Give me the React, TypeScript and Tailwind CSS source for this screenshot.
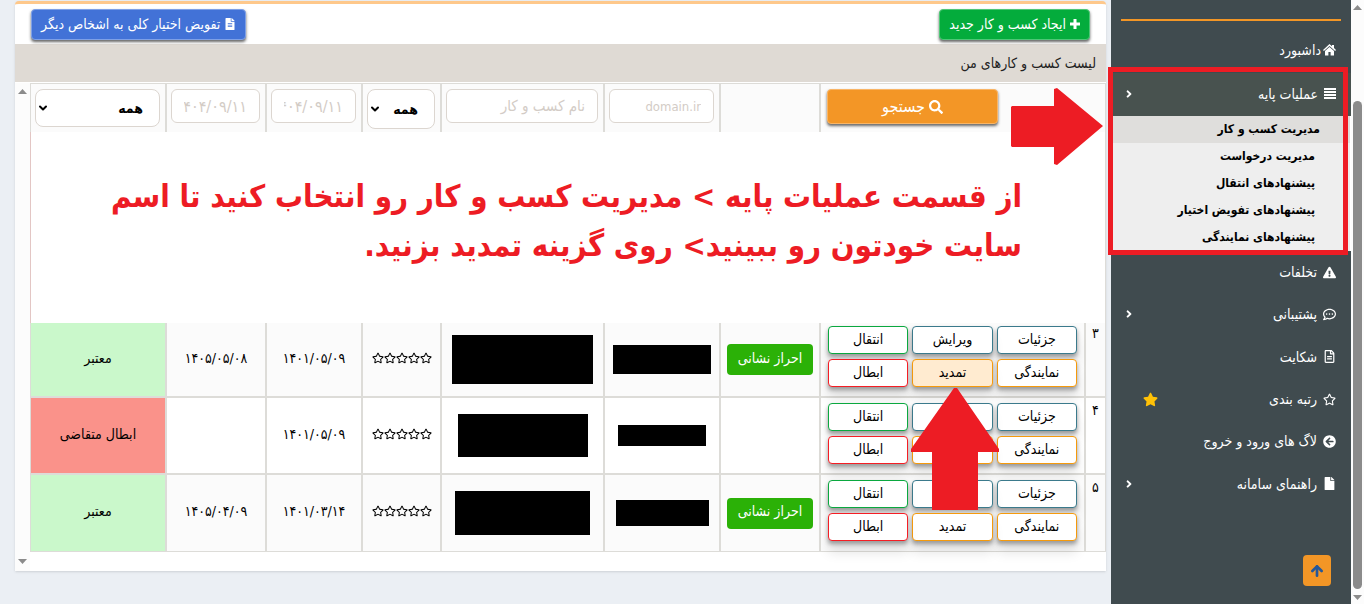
import type { ReactNode } from 'react';
import clsx from 'clsx';
import {
  FaAngleRight,
  FaArrowCircleLeft,
  FaExclamationTriangle,
  FaFile,
  FaFileAlt,
  FaRegCommentDots,
  FaRegFileAlt,
  FaRegStar,
  FaSearch,
  FaStar,
} from 'react-icons/fa';
import { ArrowUp, ChevronDown } from 'lucide-react';

const submenu = [
  'مدیریت کسب و کار',
  'مدیریت درخواست',
  'پیشنهادهای انتقال',
  'پیشنهادهای تفویض اختیار',
  'پیشنهادهای نمایندگی',
];

const menu = [
  { icon: FaExclamationTriangle, label: 'تخلفات' },
  { icon: FaRegCommentDots, label: 'پشتیبانی', expandable: true },
  { icon: FaRegFileAlt, label: 'شکایت' },
  { icon: FaRegStar, label: 'رتبه بندی', starred: true },
  { icon: FaArrowCircleLeft, label: 'لاگ های ورود و خروج' },
  { icon: FaFile, label: 'راهنمای سامانه', expandable: true },
];

const actions = [
  { label: 'جزئیات', border: 'border-[#3b7a8c]' },
  { label: 'ویرایش', border: 'border-[#3b7a8c]' },
  { label: 'انتقال', border: 'border-[#0aa83f]' },
  { label: 'نمایندگی', border: 'border-[#f59a0c]' },
  { label: 'تمدید', border: 'border-[#f59a0c]' },
  { label: 'ابطال', border: 'border-[#f51d24]' },
];

const rows = [
  {
    index: '۳',
    verify: true,
    domainMask: 'w-[98px] h-[29px]',
    nameMask: 'w-[141px] h-[49px]',
    start: '۱۴۰۱/۰۵/۰۹',
    end: '۱۴۰۵/۰۵/۰۸',
    status: 'معتبر',
    valid: true,
    highlight: true,
  },
  {
    index: '۴',
    verify: false,
    domainMask: 'w-[88px] h-[21px]',
    nameMask: 'w-[130px] h-[43px]',
    start: '۱۴۰۱/۰۵/۰۹',
    end: '',
    status: 'ابطال متقاضی',
    valid: false,
    highlight: false,
  },
  {
    index: '۵',
    verify: true,
    domainMask: 'w-[93px] h-[26px]',
    nameMask: 'w-[135px] h-[44px]',
    start: '۱۴۰۱/۰۳/۱۴',
    end: '۱۴۰۵/۰۴/۰۹',
    status: 'معتبر',
    valid: true,
    highlight: false,
  },
];

const inputClass =
  'block w-full h-[34px] rounded-md border border-[#dcd6d0] bg-white px-3 outline-none placeholder:text-[#d3ccc6]';

const raisedButton = 'flex items-center justify-center gap-1 rounded-sm border text-white shadow-[0_2px_3px_#666]';

function Cell({ className, edge = 'border-l-2', children }: { className?: string; edge?: string; children?: ReactNode }) {
  return (
    <td className={clsx('border-b-2 border-[#dddcd8] p-0 text-center group-last:border-b', edge, className)}>{children}</td>
  );
}

function FilterCell({ edge = 'border-l-2', children }: { edge?: string; children?: ReactNode }) {
  return (
    <th className={clsx('border-t border-[#dddcd8] bg-[#fbfbfb] pt-[5px] pr-[5px] pb-0 pl-1 align-top font-normal', edge)}>
      {children}
    </th>
  );
}

function FilterSelect({ label, className }: { label: string; className: string }) {
  return (
    <div className="relative">
      <select
        aria-label={label}
        className={clsx('block w-full appearance-none rounded-lg border border-[#dcd6d0] bg-white px-4 text-sm font-bold text-black', className)}
      >
        <option>همه</option>
      </select>
      <ChevronDown className="pointer-events-none absolute left-0.5 top-1/2 size-3 -translate-y-1/2 text-black" strokeWidth={4} />
    </div>
  );
}

function ScrollRail({ children, className }: { children?: ReactNode; className: string }) {
  return (
    <div className={clsx('flex shrink-0 flex-col items-center bg-[#fcfcfc]', className)} aria-hidden="true">
      <svg className="h-[5px] w-[9px] shrink-0 fill-[#8b8b8b]" viewBox="0 0 9 5">
        <path d="M4.5 0 9 5H0z" />
      </svg>
      {children}
      <svg className="h-[5px] w-[9px] shrink-0 fill-[#8b8b8b]" viewBox="0 0 9 5">
        <path d="M0 0h9L4.500 5z" />
      </svg>
    </div>
  );
}

function HomeIcon() {
  return (
    <svg className="h-3 w-[13px]" viewBox="0 0 13 12" fill="currentColor" aria-hidden="true">
      <path d="M6.500 0 9 2.300V1h2v3.100l2 1.900-.9 1L6.500 1.900.9 7 0 6z" />
      <path d="M6.500 3 11 7v4.500H7.600V8H5.400v3.500H2V7z" />
    </svg>
  );
}

function BarsIcon() {
  return (
    <svg className="h-[11px] w-3" viewBox="0 0 12 11" fill="currentColor" aria-hidden="true">
      <path d="M0 0h12v2H0zM0 3h12v2H0zM0 6h12v2H0zM0 9h12v2H0z" />
    </svg>
  );
}

function PlusIcon() {
  return (
    <svg className="size-2.5" viewBox="0 0 10 10" fill="currentColor" aria-hidden="true">
      <path d="M3.500 0h3v3.500H10v3H6.500V10h-3V6.500H0v-3h3.500z" />
    </svg>
  );
}

function Sidebar() {
  return (
    <aside className="flex w-60 shrink-0 flex-col bg-[#404b4f] text-sm text-white">
      <div className="mx-2.5 mt-[19px] h-0.5 bg-[#f39626]" />
      <nav>
        <a href="#dashboard" className="mt-2 flex h-11 items-center gap-0.5 pr-[15px] pb-0.5">
          <HomeIcon />
          داشبورد
        </a>
        <div className="relative">
          <a href="#base" className="flex h-[43px] items-center gap-1.5 border-l-2 border-[#f39626] bg-[#48524f] pr-[15px] pb-0.5 pl-2.5">
            <BarsIcon />
            <span className="flex-1">عملیات پایه</span>
            <FaAngleRight className="size-3" />
          </a>
          <ul className="border-r border-white bg-[#eeeeee] text-xs font-bold text-black">
            {submenu.map((item, i) => (
              <li key={item}>
                <a
                  href={`#sub-${i}`}
                  className={clsx('flex h-[27px] items-center pb-0.5', i === 0 ? 'bg-[#dfdedc] pr-[30px]' : 'pr-[35px]')}
                >
                  {item}
                </a>
              </li>
            ))}
          </ul>
          <div className="pointer-events-none absolute -top-1.5 -bottom-1 -left-[3px] right-[3px] border-[5px] border-[#ed1c24]" />
        </div>
        <ul className="grid h-[254px] auto-rows-fr">
          {menu.map(({ icon: Icon, label, expandable, starred }) => (
            <li key={label} className="flex">
              <a href={`#${label}`} className="flex flex-1 items-center gap-1.5 pr-[15px] pl-3">
                <Icon className="size-[13px]" />
                <span className="flex-1">{label}</span>
                {expandable && <FaAngleRight className="size-3" />}
                {starred && <FaStar className="ml-5 size-[15px] text-[#ffc107]" />}
              </a>
            </li>
          ))}
        </ul>
      </nav>
      <button
        type="button"
        aria-label="بازگشت به بالا"
        className="mt-auto mr-5 mb-[18px] flex h-[31px] w-7 items-center justify-center rounded-sm bg-[#f39626] text-[#24579a]"
      >
        <ArrowUp className="size-4" strokeWidth={4} />
      </button>
    </aside>
  );
}

function BusinessTable() {
  return (
    <table className="w-full table-fixed border-separate border-spacing-0 border-r border-[#dddcd8] text-sm text-black">
      <colgroup>
        <col className="w-[21px]" />
        <col className="w-[265px]" />
        <col className="w-[100px]" />
        <col className="w-[116px]" />
        <col />
        <col className="w-[79px]" />
        <col className="w-[96px]" />
        <col className="w-[100px]" />
        <col className="w-[135px]" />
      </colgroup>
      <thead>
        <tr className="h-[49px]">
          <FilterCell edge="border-l-0" />
          <FilterCell>
            <button
              type="button"
              className={clsx(raisedButton, 'mr-auto ml-0.5 h-[35px] w-[171px] border-[#f9b566] bg-[#f39626] text-base')}
            >
              <FaSearch className="size-3.5" />
              جستجو
            </button>
          </FilterCell>
          <FilterCell />
          <FilterCell>
            <input aria-label="دامنه" placeholder="domain.ir" className={clsx(inputClass, 'text-[13px]')} />
          </FilterCell>
          <FilterCell>
            <input aria-label="نام کسب و کار" placeholder="نام کسب و کار" className={clsx(inputClass, 'text-[15px]')} />
          </FilterCell>
          <FilterCell>
            <FilterSelect label="ستاره" className="h-10" />
          </FilterCell>
          <FilterCell>
            <input aria-label="تاریخ شروع" placeholder="۱۴۰۴/۰۹/۱۱" className={clsx(inputClass, 'text-base')} />
          </FilterCell>
          <FilterCell>
            <input aria-label="تاریخ پایان" placeholder="۱۴۰۴/۰۹/۱۱" className={clsx(inputClass, 'text-base')} />
          </FilterCell>
          <FilterCell edge="border-l">
            <FilterSelect label="وضعیت" className="h-[38px]" />
          </FilterCell>
        </tr>
      </thead>
      <tbody>
        <tr>
          <td colSpan={9} className="h-[191px] border-l border-[#e3c6c4] bg-white p-0 pt-10 pr-[83px] text-right align-top">
            <p className="text-[31px] leading-[49px] font-bold text-[#ed1c24]">
              از قسمت عملیات پایه &gt; مدیریت کسب و کار رو انتخاب کنید تا اسم
              <br />
              سایت خودتون رو ببینید&gt; روی گزینه تمدید بزنید.
            </p>
          </td>
        </tr>
        {rows.map((row, i) => (
          <tr key={row.index} className={clsx('group', i === 0 ? 'h-[75px]' : 'h-[77px]', i % 2 === 0 && 'bg-[#fbfbfb]')}>
            <Cell className="align-top">
              <div className={i === 0 ? 'pt-0' : 'pt-0.5'}>{row.index}</div>
            </Cell>
            <Cell className="align-top">
              <div className={clsx('grid grid-cols-3 gap-x-1 gap-y-[5px] px-[7px]', i === 0 ? 'pt-[3px]' : 'pt-[5px]')}>
                {actions.map(({ label, border }) => (
                  <button
                    key={label}
                    type="button"
                    className={clsx(
                      'h-7 rounded-sm border pb-0.5 shadow-[0_3px_4px_#999,0_12px_12px_rgba(0,0,0,0.1)]',
                      border,
                      row.highlight && label === 'تمدید' ? 'bg-[#ffebd0]' : 'bg-white',
                    )}
                  >
                    {label}
                  </button>
                ))}
              </div>
            </Cell>
            <Cell>
              {row.verify && (
                <button type="button" className="h-[31px] w-[86px] rounded-sm bg-[#2bb107] pb-1 text-white">
                  احراز نشانی
                </button>
              )}
            </Cell>
            <Cell>
              <div className={clsx('mx-auto bg-black', row.domainMask)} />
            </Cell>
            <Cell>
              <div className={clsx('mx-auto bg-black', row.nameMask)} />
            </Cell>
            <Cell className="pb-1">
              <div className="flex justify-center">
                {[1, 2, 3, 4, 5].map((n) => (
                  <FaRegStar key={n} className="size-3" />
                ))}
              </div>
            </Cell>
            <Cell className="pb-1">{row.start}</Cell>
            <Cell className="pb-1">{row.end}</Cell>
            <Cell edge="border-l" className={clsx('pb-1', row.valid ? 'bg-[#caf8cb]' : 'bg-[#fa928a]')}>
              {row.status}
            </Cell>
          </tr>
        ))}
      </tbody>
    </table>
  );
}

export default function App() {
  return (
    <div dir="rtl" className="relative flex bg-white pb-0.5 font-['DejaVu_Sans_Condensed','DejaVu_Sans',sans-serif]">
      <ScrollRail className="w-[13px] pt-[5px] pb-1">
        <div className="mt-[91px] mb-1.5 w-[9px] flex-1 rounded-full bg-[#8b8b8b]" />
      </ScrollRail>
      <Sidebar />
      <main className="min-w-0 flex-1 bg-[#ebeff4] pt-px pr-[5px] pb-[33px] pl-[15px]">
        <section className="rounded-t-sm border-t-[3px] border-[#fec88b] bg-white shadow-sm">
          <div className="flex h-10 justify-between px-4 pt-[5px] text-sm">
            <button type="button" className={clsx(raisedButton, 'h-[31px] border-[#4fc777] bg-[#04ac3c] px-[9px] pb-0.5')}>
              <PlusIcon />
              ایجاد کسب و کار جدید
            </button>
            <button type="button" className={clsx(raisedButton, 'h-[31px] border-[#7fa0e6] bg-[#4272d7] px-[9px] pb-0.5')}>
              <FaFileAlt className="size-3" />
              تفویض اختیار کلی به اشخاص دیگر
            </button>
          </div>
          <h1 className="flex h-[38px] items-center bg-[#dfdad4] pr-2.5 text-sm text-[#222]">لیست کسب و کارهای من</h1>
          <div className="flex pt-px">
            <div className="min-w-0 flex-1 pb-[19px]">
              <BusinessTable />
            </div>
            <ScrollRail className="w-[15px] justify-between pt-1.5 pb-[7px]" />
          </div>
        </section>
      </main>

      {/* annotation arrows */}
      <svg className="pointer-events-none absolute top-[88px] right-[261px] h-[77px] w-[92px] fill-[#ed1c24]" viewBox="0 0 92 77">
        <path d="M1 18h42V1l3-1 46 38-46 39-3-1V59H1l-1-1V19z" />
      </svg>
      <svg className="pointer-events-none absolute top-[388px] right-[365px] h-[122px] w-[88px] fill-[#ed1c24]" viewBox="0 0 88 122">
        <path d="M43 0h3l42 61v3H67v58H21V64H0v-3z" />
      </svg>
    </div>
  );
}
